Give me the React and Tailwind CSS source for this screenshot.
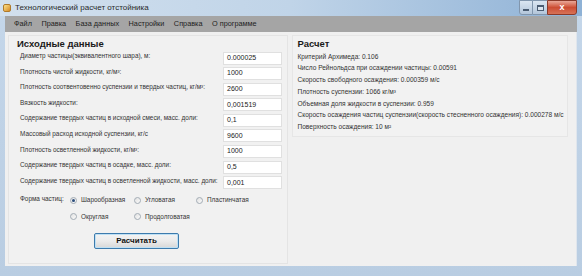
const font = { fontFamily: '"Liberation Sans", Arial, sans-serif' };

const inputs = [
  ["Диаметр частицы(эквивалентного шара), м:", "0.000025"],
  ["Плотность чистой жидкости, кг/м³:", "1000"],
  ["Плотность соотвентовенно суспензии и твердых частиц, кг/м³:", "2600"],
  ["Вязкость жидкости:", "0,001519"],
  ["Содержание твердых частиц в исходной смеси, масс. доли:", "0,1"],
  ["Массовый расход исходной суспензии, кг/с", "9600"],
  ["Плотность осветленной жидкости, кг/м³:", "1000"],
  ["Содержание твердых частиц в осадке, масс. доли:", "0,5"],
  ["Содержание твердых частиц в осветленной жидкости, масс. доли:", "0,001"],
];

const results = [
  "Критерий Архимеда: 0.106",
  "Число Рейнольдса при осаждении частицы: 0.00591",
  "Скорость свободного осаждения: 0.000359 м/с",
  "Плотность суспензии: 1066 кг/м³",
  "Объемная доля жидкости в суспензии: 0.959",
  "Скорость осаждения частиц суспензии(скорость стесненного осаждения): 0.000278 м/с",
  "Поверхность осаждения: 10 м²",
];

function Radio({ label, checked }) {
  return (
    <div className="flex items-center gap-[4px]">
      <span className="w-[7px] h-[7px] shrink-0 rounded-full border border-[#a3acb5] bg-gradient-to-br from-[#e2e2e2] to-[#fafafa] flex items-center justify-center">
        {checked && <span className="w-[3px] h-[3px] rounded-full bg-[#2b4d7c]" />}
      </span>
      <span>{label}</span>
    </div>
  );
}

export default function App() {
  return (
    <div style={font} className="w-[582px] h-[276px] overflow-hidden flex flex-col bg-gradient-to-b from-[#c5d7ea] to-[#b9cde2] text-[#1a1a1a]">
      {/* title bar */}
      <div className="h-[16px] flex items-center pl-[3px] relative bg-gradient-to-r from-[#d2e0ee] via-[#c0d4e8] to-[#8fb2d6]">
        <span className="w-[8px] h-[8px] rounded-[2px] bg-gradient-to-br from-[#fbe38a] to-[#d58b1f] border border-[#b07a2a]" />
        <span className="ml-[4px] text-[8px] text-[#2a2a2a]">Технологический расчет отстойника</span>
        <div className="absolute right-[5px] top-0 flex h-[15px]">
          <div className="w-[14px] border border-[#8196ad] rounded-bl-[3px] bg-gradient-to-b from-[#dbe6f2] to-[#b3c6da] flex items-end justify-center pb-[3px]">
            <span className="w-[6px] h-[2px] bg-white border border-[#4a5c72]" />
          </div>
          <div className="w-[14px] border-y border-[#8196ad] bg-gradient-to-b from-[#dbe6f2] to-[#b3c6da] flex items-center justify-center">
            <span className="w-[7px] h-[6px] border border-[#4a5c72] border-t-2 bg-white/40" />
          </div>
          <div className="w-[30px] border border-[#8a3a2a] rounded-br-[3px] bg-gradient-to-b from-[#e9a797] via-[#cc4d33] to-[#d77257] flex items-center justify-center text-white text-[9px] font-bold leading-none">
            x
          </div>
        </div>
      </div>

      <div className="flex-1 flex flex-col px-[5px] pb-[10px]">
        {/* menu */}
        <div className="h-[16px] bg-[#a5a5a5] flex items-center gap-[9.5px] pl-[9px] text-[7.3px] text-[#1e1e1e]">
          <span>Файл</span>
          <span>Правка</span>
          <span>База данных</span>
          <span>Настройки</span>
          <span>Справка</span>
          <span>О программе</span>
        </div>

        <div className="flex-1 bg-[#f0f0f0] flex gap-[4px] pt-[3px] pl-[3px] pr-[8px] pb-[2px] border-r border-[#e0e6ed]">
          {/* left panel */}
          <div className="w-[280px] border border-[#e4e4e4] bg-[#f1f1f1] pl-[8px] pt-[3px] flex flex-col">
            <div className="text-[9.5px] font-bold leading-none">Исходные данные</div>
            <div className="flex flex-col gap-[2.6px] mt-[3px] text-[6.4px] text-[#333]">
              {inputs.map(([label, value], i) => (
                <div key={i} className="flex items-start h-[13px]">
                  <span className="w-[206px] shrink-0 pl-[3px] -mt-[0.5px] whitespace-nowrap">{label}</span>
                  <div className="w-[59px] h-[13px] bg-white border border-[#e0e0e0] flex items-center pl-[3px] text-[7px] text-[#222]">
                    {value}
                  </div>
                </div>
              ))}
            </div>

            <div className="flex mt-[5px] text-[6.4px] text-[#333]">
              <span className="w-[53px] shrink-0 pl-[3px]">Форма частиц:</span>
              <div className="grid grid-cols-[64px_62px_auto] gap-y-[7px] mt-[1px]">
                <Radio label="Шарообразная" checked />
                <Radio label="Угловатая" />
                <Radio label="Пластинчатая" />
                <Radio label="Округлая" />
                <Radio label="Продолговатая" />
              </div>
            </div>

            <button className="ml-[77px] mt-[12px] w-[85px] h-[16px] rounded-[2px] border border-[#3d7bad] bg-gradient-to-b from-[#f4f4f4] via-[#ebebeb] to-[#d7d7d7] text-[8px] font-bold text-[#111] flex items-center justify-center shadow-[inset_0_0_0_1px_#bfe0f4]">
              Расчитать
            </button>
          </div>

          {/* right panel */}
          <div className="w-[277px] h-[102px] border border-[#e6e6e6] bg-[#f2f2f2] pl-[5px] pt-[3px]">
            <div className="text-[9.5px] font-bold leading-none">Расчет</div>
            <div className="flex flex-col mt-[2px] text-[6.55px] text-[#333] leading-[11.8px] whitespace-nowrap">
              {results.map((r, i) => (
                <span key={i}>{r}</span>
              ))}
            </div>
          </div>
        </div>
      </div>
    </div>
  );
}
